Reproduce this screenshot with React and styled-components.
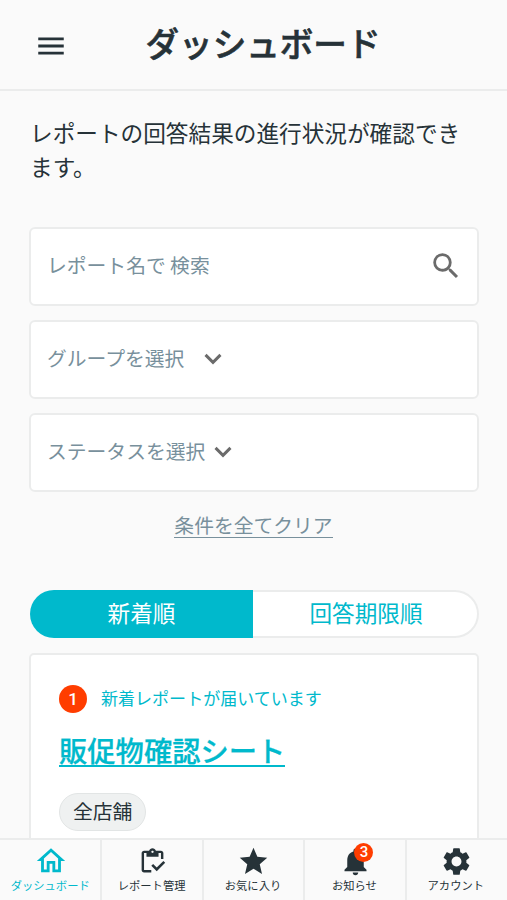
import React, { useState } from "react"
import styled, { createGlobalStyle } from "styled-components"
import {
  MdMenu,
  MdSearch,
  MdOutlineHome,
  MdOutlineInventory,
  MdStar,
  MdNotifications,
  MdSettings,
} from "react-icons/md"

const GlobalStyle = createGlobalStyle`
  :root {
    --main: #00b9cc;
    --text: #263238;
    --sub: #78909c;
    --line: #ebecec;
    --bg: #fafafa;
    --alert: #ff3d00;
  }
  * {
    box-sizing: border-box;
  }
  body {
    margin: 0;
    background: var(--bg);
    color: var(--text);
    font-family: "Noto Sans CJK JP", sans-serif;
  }
  button {
    padding: 0;
    border: none;
    background: none;
    font-family: inherit;
  }
`

const Page = styled.div`
  display: flex;
  flex-direction: column;
  height: 900px;
  overflow: hidden;
`

const Header = styled.header`
  display: grid;
  grid-template-columns: 34px 1fr;
  align-items: center;
  flex: none;
  height: 91px;
  padding: 0 17px 0 34px;
  border-bottom: 2px solid var(--line);
`

const MenuButton = styled.button`
  display: flex;
  padding-top: 2px;
  color: var(--text);
`

const PageTitle = styled.h1`
  margin: 0 32px 3px 0;
  font-size: 33.6px;
  font-weight: 500;
  -webkit-text-stroke: 0.6px currentColor;
  line-height: 50px;
  text-align: center;
`

const Main = styled.main`
  flex: 1;
  min-height: 0;
  padding: 25px 28px 0 29px;
  overflow: hidden;
`

const Lead = styled.p`
  margin: 0 0 68px;
  padding-left: 1px;
  height: 43px;
  font-size: 22.65px;
  line-height: 34px;
`

const Filters = styled.div`
  display: grid;
  gap: 14px;
`

const Field = styled.div`
  display: flex;
  align-items: center;
  gap: ${({ $gap }) => $gap || 0}px;
  height: 79px;
  padding: 0 14px 4px 16px;
  border: 2px solid var(--line);
  border-radius: 6px;
  background: #fff;
  color: #6b6b6b;
  svg {
    margin-top: 3px;
  }
`

const SearchInput = styled.input`
  flex: 1;
  min-width: 0;
  padding: 0;
  border: none;
  outline: none;
  font-family: inherit;
  font-size: 19.8px;
  &::placeholder {
    color: var(--sub);
    opacity: 1;
  }
`

const SelectLabel = styled.span`
  color: var(--sub);
  font-size: 19.8px;
`

const ClearRow = styled.div`
  display: flex;
  justify-content: center;
  margin: 20px 1px 52px 0;
`

const ClearButton = styled.button`
  height: 26px;
  border-bottom: 1.5px solid var(--sub);
  color: var(--sub);
  font-size: 19.8px;
  line-height: 26px;
`

const Tabs = styled.div`
  display: grid;
  grid-template-columns: 223px 1fr;
  height: 48px;
  margin: 0 0 15px 1px;
`

const Tab = styled.button`
  padding-bottom: 3px;
  border: 2px solid
    ${({ $active }) => ($active ? "var(--main)" : "var(--line)")};
  background: ${({ $active }) => ($active ? "var(--main)" : "#fff")};
  color: ${({ $active }) => ($active ? "#fff" : "var(--main)")};
  font-size: 22.6px;
  line-height: 34px;
  &:first-child {
    padding-right: 2px;
    border-right: none;
    border-radius: 24px 0 0 24px;
  }
  &:last-child {
    padding-left: 2px;
    border-left: none;
    border-radius: 0 24px 24px 0;
  }
`

const Card = styled.article`
  height: 240px;
  padding: 29px 28px;
  border: 2px solid var(--line);
  border-radius: 5px;
  background: #fff;
`

const Notice = styled.div`
  display: flex;
  align-items: center;
  gap: 14px;
  height: 30px;
  color: var(--main);
  font-size: 17.05px;
`

const NoticeText = styled.span`
  padding-bottom: 3px;
`

const Count = styled.span`
  display: grid;
  place-items: center;
  width: 28px;
  height: 28px;
  border-radius: 50%;
  background: var(--alert);
  color: #fff;
  font-family: Roboto, sans-serif;
  font-size: 17px;
  font-weight: 500;
`

const ReportLink = styled.a`
  display: block;
  width: max-content;
  height: 36px;
  margin-top: 17px;
  border-bottom: 2px solid var(--main);
  color: var(--main);
  font-size: 28.3px;
  font-weight: 500;
  -webkit-text-stroke: 0.25px currentColor;
  line-height: 37px;
  text-decoration: none;
`

const Tag = styled.span`
  display: inline-block;
  height: 38px;
  margin-top: 26px;
  padding: 0 13px;
  border: 1px solid #e2e5e5;
  border-radius: 19px;
  background: #eff1f1;
  font-size: 19.8px;
  line-height: 34px;
`

const BottomNav = styled.nav`
  display: grid;
  grid-template-columns: repeat(5, 1fr);
  flex: none;
  height: 62px;
  border-top: 2px solid var(--line);
  background: var(--bg);
`

const NavItem = styled.button`
  display: flex;
  flex-direction: column;
  align-items: center;
  padding: 4px 0 0 1px;
  color: ${({ $active }) => ($active ? "var(--main)" : "var(--text)")};
  &:not(:last-child) {
    box-shadow: inset -1px 0 var(--line), 1px 0 var(--line);
  }
`

const NavIcon = styled.span`
  position: relative;
  display: grid;
  place-items: center;
  width: 34px;
  height: 34px;
`

const NavLabel = styled.span`
  margin-right: 2px;
  font-size: 11.3px;
  line-height: 15px;
  white-space: nowrap;
`

const Badge = styled.span`
  position: absolute;
  top: -1px;
  right: -1px;
  display: grid;
  place-items: center;
  width: 19px;
  height: 19px;
  border-radius: 50%;
  background: var(--alert);
  color: #fff;
  font-family: Roboto, sans-serif;
  font-size: 15px;
  font-weight: 500;
  line-height: 19px;
`

const sortTabs = ["新着順", "回答期限順"]

const navItems = [
  { label: "ダッシュボード", Icon: MdOutlineHome, size: 34 },
  { label: "レポート管理", Icon: MdOutlineInventory, size: 29 },
  { label: "お気に入り", Icon: MdStar, size: 33 },
  { label: "お知らせ", Icon: MdNotifications, size: 33, badge: 3 },
  { label: "アカウント", Icon: MdSettings, size: 33 },
]

function Chevron() {
  return (
    <svg width="32" height="32" viewBox="0 0 24 24" fill="none">
      <path
        d="M6.4 8.9 12 14.5 17.6 8.9"
        stroke="currentColor"
        strokeWidth="2.2"
      />
    </svg>
  )
}

function Select({ label, gap }) {
  return (
    <Field $gap={gap}>
      <SelectLabel>{label}</SelectLabel>
      <Chevron />
    </Field>
  )
}

export default function App() {
  const [sort, setSort] = useState(0)
  const [page, setPage] = useState(0)
  const [keyword, setKeyword] = useState("")

  return (
    <Page>
      <GlobalStyle />
      <Header>
        <MenuButton>
          <MdMenu size={34} />
        </MenuButton>
        <PageTitle>ダッシュボード</PageTitle>
      </Header>
      <Main>
        <Lead>レポートの回答結果の進行状況が確認できます。</Lead>
        <Filters>
          <Field>
            <SearchInput
              placeholder="レポート名で 検索"
              value={keyword}
              onChange={(e) => setKeyword(e.target.value)}
            />
            <MdSearch size={34} />
          </Field>
          <Select label="グループを選択" gap={13} />
          <Select label="ステータスを選択" gap={2} />
        </Filters>
        <ClearRow>
          <ClearButton onClick={() => setKeyword("")}>
            条件を全てクリア
          </ClearButton>
        </ClearRow>
        <Tabs>
          {sortTabs.map((label, i) => (
            <Tab key={label} $active={sort === i} onClick={() => setSort(i)}>
              {label}
            </Tab>
          ))}
        </Tabs>
        <Card>
          <Notice>
            <Count>1</Count>
            <NoticeText>新着レポートが届いています</NoticeText>
          </Notice>
          <ReportLink>販促物確認シート</ReportLink>
          <Tag>全店舗</Tag>
        </Card>
      </Main>
      <BottomNav>
        {navItems.map(({ label, Icon, size, badge }, i) => (
          <NavItem key={label} $active={page === i} onClick={() => setPage(i)}>
            <NavIcon>
              <Icon size={size} />
              {badge && <Badge>{badge}</Badge>}
            </NavIcon>
            <NavLabel>{label}</NavLabel>
          </NavItem>
        ))}
      </BottomNav>
    </Page>
  )
}
